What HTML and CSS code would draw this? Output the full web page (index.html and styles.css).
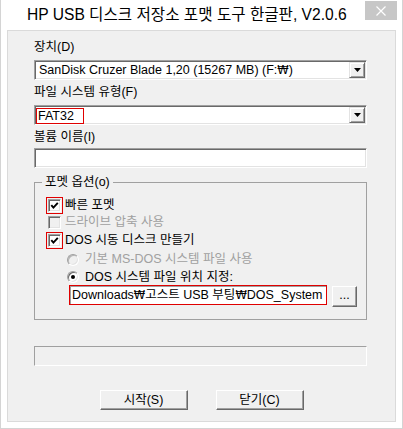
FILE: index.html
```html
<!DOCTYPE html>
<html lang="ko">
<head>
    <meta charset="UTF-8">
    <title>HP USB 디스크 저장소 포맷 도구 한글판, V2.0.6</title>
    <link rel="stylesheet" href="styles.css">
</head>
<body>
    <div class="window">
        <div class="titlebar">
            <span class="title">HP USB 디스크 저장소 포맷 도구 한글판, V2.0.6</span>
            <span class="close">
                <svg width="10" height="10" viewBox="0 0 10 10"><path d="M0.5 0.5 L9.5 9.5 M9.5 0.5 L0.5 9.5" stroke="#fff" stroke-width="1.2" fill="none"/></svg>
            </span>
        </div>

        <div class="panel">
            <div class="label">장치(D)</div>
            <div class="combo">
                <span class="combo-text">SanDisk Cruzer Blade 1,20 (15267 MB) (F:<span class="won">₩</span>)</span>
                <span class="drop"><svg width="7" height="4" viewBox="0 0 7 4"><polygon points="0,0 7,0 3.5,4" fill="#000"/></svg></span>
            </div>

            <div class="label">파일 시스템 유형(F)</div>
            <div class="combo">
                <span class="combo-text mark">FAT32</span>
                <span class="drop"><svg width="7" height="4" viewBox="0 0 7 4"><polygon points="0,0 7,0 3.5,4" fill="#000"/></svg></span>
            </div>

            <div class="label">볼륨 이름(I)</div>
            <div class="textbox"></div>

            <fieldset class="group">
                <legend>포멧 옵션(o)</legend>

                <div class="row check-row">
                    <span class="frame marked"><span class="cb"><svg width="9" height="9" viewBox="0 0 9 9"><polyline points="1.3,4.2 3.4,6.6 7.8,1.8" stroke="#000" stroke-width="1.9" fill="none"/></svg></span></span>
                    <span class="text">빠른 포멧</span>
                </div>
                <div class="row check-row">
                    <span class="frame"><span class="cb disabled"></span></span>
                    <span class="text off">드라이브 압축 사용</span>
                </div>
                <div class="row check-row tall">
                    <span class="frame marked"><span class="cb"><svg width="9" height="9" viewBox="0 0 9 9"><polyline points="1.3,4.2 3.4,6.6 7.8,1.8" stroke="#000" stroke-width="1.9" fill="none"/></svg></span></span>
                    <span class="text">DOS 시동 디스크 만들기</span>
                </div>
                <div class="row radio-row tall">
                    <span class="radio disabled"></span>
                    <span class="text off">기본 MS-DOS 시스템 파일 사용</span>
                </div>
                <div class="row radio-row short">
                    <span class="radio"><span class="dot"></span></span>
                    <span class="text">DOS 시스템 파일 위치 지정:</span>
                </div>
                <div class="row path-row">
                    <div class="path">Downloads<span class="won">₩</span>고스트 USB 부팅<span class="won">₩</span>DOS_System</div>
                    <div class="btn small">...</div>
                </div>
            </fieldset>

            <div class="progress"></div>

            <div class="buttons">
                <div class="btn">시작(S)</div>
                <div class="btn">닫기(C)</div>
            </div>
        </div>
    </div>
</body>
</html>
```

FILE: styles.css
```css
body {
    margin: 0;
    font-family: "Liberation Sans", "Noto Sans CJK KR", sans-serif;
    font-size: 12.5px;
    color: #000;
    background: #fff;
}

.window {
    width: 403px;
    height: 429px;
    box-sizing: border-box;
    border: 1px solid #d4d4d4;
    border-top: none;
    background: #fff;
}

.titlebar {
    height: 30px;
    display: flex;
    justify-content: space-between;
    align-items: flex-start;
}

.title {
    padding-left: 26px;
    font-size: 15.6px;
    line-height: 30px;
    color: #000;
    white-space: nowrap;
}

.close {
    width: 32px;
    height: 19px;
    margin-top: 1px;
    margin-right: 5px;
    background: #c7c7c7;
    display: flex;
    align-items: center;
    justify-content: center;
}

.panel {
    margin: 0 6px;
    height: 392px;
    box-sizing: border-box;
    border: 1px solid #dadada;
    background: #f0f0f0;
    padding: 9px 28px 0 26px;
}

.label {
    height: 15px;
    line-height: 15px;
    white-space: nowrap;
}

.won {
    font-family: "DejaVu Sans", "Liberation Sans", sans-serif;
    font-size: 11.5px;
}

.combo {
    height: 20px;
    margin: 5px 0;
    box-sizing: border-box;
    border: 1px solid;
    border-color: #a0a0a0 #fff #fff #a0a0a0;
    box-shadow: inset 1px 1px #696969, inset -1px -1px #e3e3e3;
    background: #fff;
    display: flex;
    align-items: center;
    justify-content: space-between;
    padding: 1px;
}

.combo-text {
    padding-left: 3px;
    line-height: 16px;
    white-space: nowrap;
}

.combo-text.mark {
    width: 48px;
    height: 16px;
    padding-left: 1px;
    border: 1px solid #e00000;
    box-sizing: border-box;
    line-height: 14px;
    margin-top: 1px;
}

.drop {
    width: 16px;
    height: 16px;
    box-sizing: border-box;
    border: 1px solid;
    border-color: #e3e3e3 #696969 #696969 #e3e3e3;
    box-shadow: inset 1px 1px #fff, inset -1px -1px #a0a0a0;
    background: #f0f0f0;
    display: flex;
    align-items: center;
    justify-content: center;
}

.textbox {
    height: 20px;
    margin-top: 3px;
    box-sizing: border-box;
    border: 1px solid;
    border-color: #a0a0a0 #fff #fff #a0a0a0;
    box-shadow: inset 1px 1px #696969, inset -1px -1px #e3e3e3;
    background: #fff;
}

.group {
    margin: 7px 0 0;
    padding: 7px 0 12px;
    border: 1px solid #a0a0a0;
    height: 145px;
    box-sizing: border-box;
}

.group legend {
    margin-left: 7px;
    padding: 0 3px;
    line-height: 15px;
}

.row {
    display: flex;
    align-items: center;
    white-space: nowrap;
}

.check-row {
    height: 17px;
    padding-left: 11px;
}

.check-row.tall {
    height: 19px;
}

.radio-row {
    padding-left: 32px;
    height: 19px;
}

.radio-row.short {
    height: 16px;
}

.frame {
    width: 17px;
    height: 17px;
    box-sizing: border-box;
    border: 1px solid transparent;
    display: flex;
    align-items: center;
    justify-content: center;
}

.frame.marked {
    border-color: #e00000;
}

.cb {
    width: 13px;
    height: 13px;
    box-sizing: border-box;
    border: 1px solid;
    border-color: #a0a0a0 #fff #fff #a0a0a0;
    box-shadow: inset 1px 1px #696969, inset -1px -1px #e3e3e3;
    background: #fff;
    display: flex;
    align-items: center;
    justify-content: center;
}

.cb.disabled {
    background: #f0f0f0;
}

.text {
    padding-left: 2px;
    line-height: 15px;
}

.radio-row .text {
    padding-left: 6px;
}

.off {
    color: #a0a0a0;
}

.radio {
    width: 12px;
    height: 12px;
    box-sizing: border-box;
    border-radius: 50%;
    border: 1px solid;
    border-color: #a0a0a0 #fff #fff #a0a0a0;
    box-shadow: inset 1px 1px #696969, inset -1px -1px #e3e3e3;
    background: #fff;
    display: flex;
    align-items: center;
    justify-content: center;
}

.radio.disabled {
    background: #f0f0f0;
    box-shadow: inset 1px 1px #b5b5b5, inset -1px -1px #e3e3e3;
}

.dot {
    width: 4px;
    height: 4px;
    border-radius: 50%;
    background: #000;
}

.path-row {
    height: 22px;
    padding-left: 34px;
    align-items: flex-start;
    gap: 5px;
}

.path {
    width: 258px;
    height: 20px;
    box-sizing: border-box;
    border: 1px solid #e00000;
    box-shadow: inset 1px 1px #a0a0a0;
    background: #fff;
    padding-left: 2px;
    line-height: 18px;
    white-space: nowrap;
    overflow: hidden;
}

.progress {
    height: 20px;
    margin-top: 26px;
    box-sizing: border-box;
    border: 1px solid;
    border-color: #a0a0a0 #fff #fff #a0a0a0;
}

.buttons {
    display: flex;
    justify-content: center;
    gap: 28px;
    margin-top: 24px;
    margin-left: -26px;
    margin-right: -28px;
}

.btn {
    width: 88px;
    height: 20px;
    box-sizing: border-box;
    border: 1px solid;
    border-color: #fff #696969 #696969 #fff;
    box-shadow: inset -1px -1px #a0a0a0;
    background: #f0f0f0;
    text-align: center;
    line-height: 18px;
}

.btn.small {
    width: 25px;
    height: 21px;
    margin-top: 1px;
    line-height: 17px;
}
```
